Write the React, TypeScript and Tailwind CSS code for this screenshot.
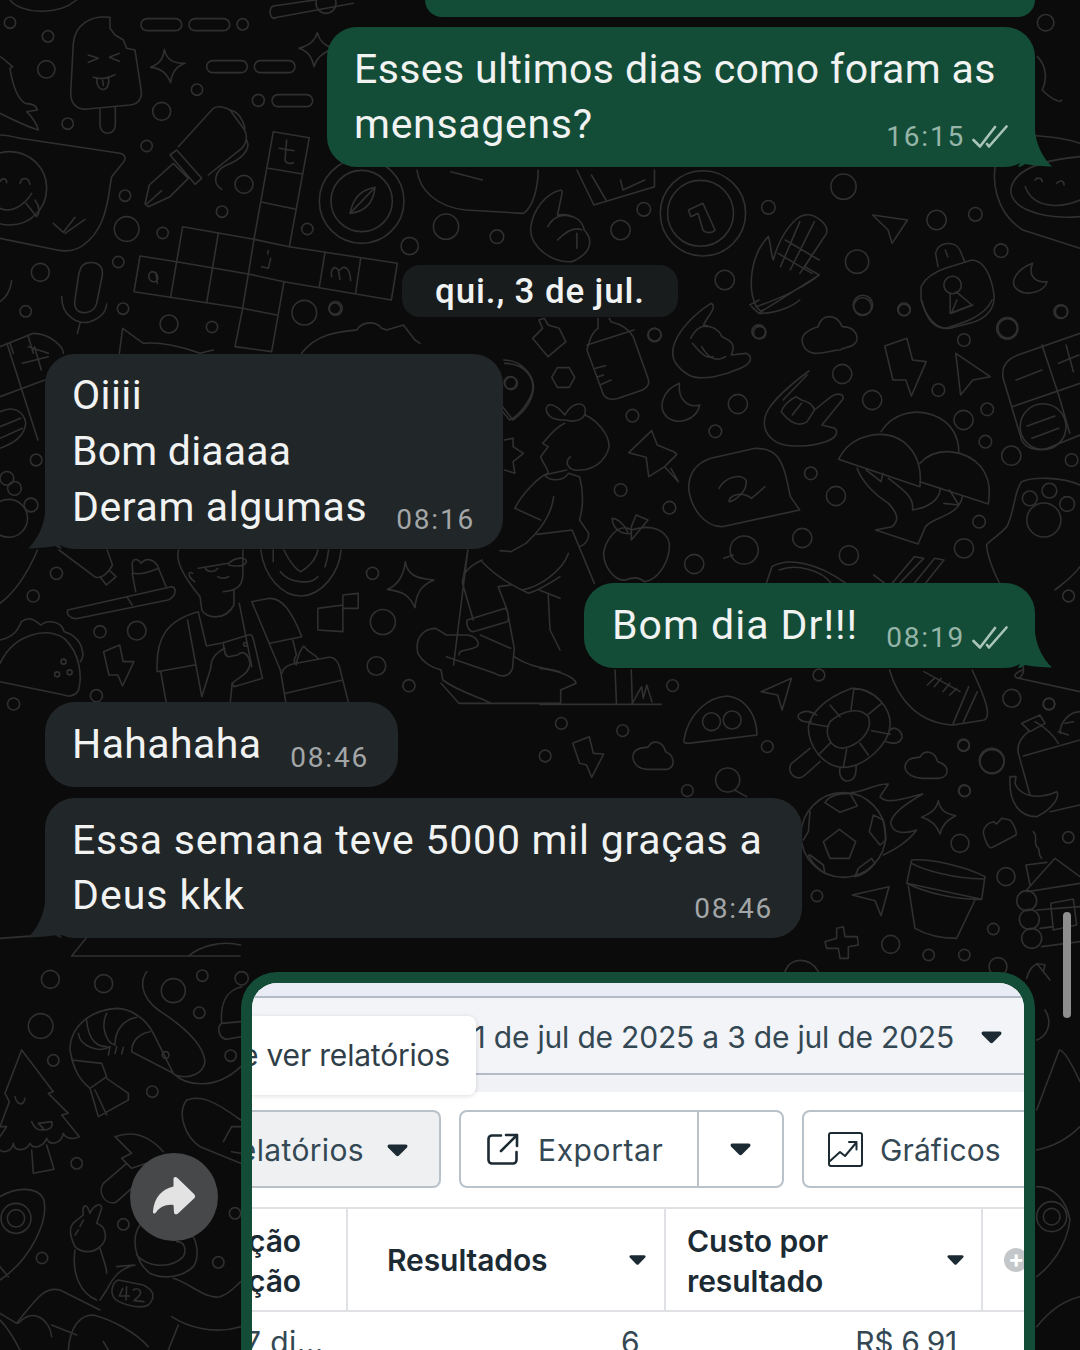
const stroke = '#303030';

interface DoodleRegion {
  x: number;
  y: number;
  sx: number;
  sy: number;
  circles: number[][];
  paths: string[];
}

// line drawings of the chat wallpaper, each block in the coordinates of one part of the picture
const doodles: DoodleRegion[] = [
  {
    x: 0, y: 0, sx: 3, sy: 3,
    circles: [[30,68,17],[144,109,17],[139,208,26],[203,371,17],[591,269,17],[728,73,17],[775,301,18],[485,334,27],[440,438,17],[375,587,17],[732,553,27],[666,635,17],[380,687,37],[488,699,17],[922,687,17],[355,786,17],[121,817,27],[77,934,17],[369,926,17],[507,972,27],[636,981,17],[913,938,37],[1005,926,17],[1229,738,26],[30,565,110],[1085,603,127],[1085,603,92],[978,10,30]],
    paths: [
      'M441 56 H527 A18 18 0 0 1 527 92 H441 A18 18 0 0 1 441 56Z',
      'M585 56 H671 A18 18 0 0 1 671 92 H585 A18 18 0 0 1 585 56Z',
      'M638 182 H724 A18 18 0 0 1 724 218 H638 A18 18 0 0 1 638 182Z',
      'M781 182 H867 A18 18 0 0 1 867 218 H781 A18 18 0 0 1 781 182Z',
      'M834 284 H920 A18 18 0 0 1 920 320 H834 A18 18 0 0 1 834 284Z',
      'M330 52 C270 45 225 75 220 130 L212 280 C212 312 232 330 262 327 L390 315 C415 312 428 295 423 268 L405 150 L380 145 L370 120 L345 105 L330 85 Z',
      'M300 328 V375 C300 408 346 408 346 375 V322',
      'M265 165 L295 175 L265 187 M358 160 L328 172 L358 184 M280 232 C300 238 325 235 345 224 M290 236 C290 285 335 275 325 230 M308 240 L310 256',
      'M493 148 C500 180 520 190 555 190 C525 200 515 220 512 248 C500 220 485 205 452 202 C480 190 490 175 493 148Z',
      'M952 98 C958 125 975 138 1000 145 C975 155 950 170 942 200 C935 170 925 155 897 145 C925 138 945 125 952 98Z',
      'M435 612 L448 555 L520 490 L565 535 L510 590 L445 620Z M510 465 L530 450 L605 535 L585 553 Z M535 440 L640 325 C655 315 680 325 690 330 L730 385 C745 405 740 430 725 445 L625 525 M690 330 C715 335 730 360 735 385 M740 420 C755 450 720 480 680 495 C645 510 635 550 665 568 M440 612 L485 572',
      'M820 395 L928 413 L868 740 L1192 790 L1174 900 L852 845 L815 1055 L705 1040 L728 925 L402 875 L420 768 L530 785 L548 680 L762 718 Z',
      'M805 505 L908 522 M787 607 L888 628 M762 718 L868 740 M530 785 L745 822 L852 845 M655 700 L620 908 M728 925 L830 945 M762 718 L728 925 M530 785 L512 890 M975 757 L958 860 M1082 775 L1067 878',
      'M860 420 L855 480 C858 492 870 492 880 488 M838 445 L882 452 M805 752 L803 762 M812 775 L805 805 L785 800 M995 830 C990 805 1005 795 1015 810 L1020 838 M1020 810 C1030 795 1050 800 1052 842 M455 815 C440 820 445 848 465 845 C478 840 475 815 455 815 M468 822 L472 850',
      'M1050 640 C1060 590 1085 570 1125 562 C1120 610 1095 635 1050 640Z M1050 640 L1125 562',
      'M0 405 C20 405 40 410 60 415 L360 460 C378 465 378 478 370 487 L335 530 L330 560 C320 640 300 700 250 735 C225 755 190 755 160 748 L0 715',
      'M0 545 C8 530 20 535 20 548 M60 550 C65 530 85 530 90 553 M0 625 C30 640 70 620 95 580 M78 610 L110 650 C120 640 120 620 105 600 M160 670 L190 697 L225 652 M195 700 L255 658',
      'M225 900 C220 925 235 940 255 938 C285 935 290 915 293 895 L307 825 C310 800 295 785 268 788 C245 790 240 805 235 830Z M185 890 C185 950 235 975 270 965 C300 955 318 935 320 912 M240 970 L232 1000',
      'M0 170 C10 175 25 190 38 200 L30 205 C40 270 60 300 75 310 C100 310 110 320 112 330 L80 335 C95 350 110 370 115 390 C80 380 40 360 0 340',
      'M35 842 C30 880 15 895 0 905 M358 1060 L368 985 L430 1030 C480 1025 550 1040 600 1060 L640 1050',
      'M905 1060 C950 1000 1020 995 1070 990 C1090 960 1130 965 1145 985 L1160 990 L1210 975 L1245 1020 L1260 1030',
      'M0 1040 L100 1000 C150 1000 190 1040 190 1060 M85 1010 L100 1060 M30 1030 L40 1060 M85 1040 L145 1060',
      'M30 0 C60 40 170 50 230 0 M820 18 L945 0 M820 54 L1060 10 M820 18 C805 25 808 55 825 55',
    ],
  },
  {
    x: 500, y: 300, sx: 2.703, sy: 3,
    circles: [[980,20,24],[1092,28,17],[1518,35,17],[1372,85,26],[1254,120,17],[418,104,17],[702,98,17],[925,222,26],[1185,270,17],[1006,300,26],[643,312,26],[358,347,17],[1317,328,17],[1253,360,26],[582,394,17],[1312,425,17],[1382,467,26],[1545,480,17],[840,520,17],[908,588,26],[326,570,17],[458,623,17],[1295,665,17],[817,714,26],[943,766,26],[1254,745,26],[525,792,26],[30,250,17],[1468,380,62],[1432,595,20],[1485,572,20],[1533,612,20],[1470,660,46],[660,750,38]],
    paths: [
      'M265 55 V85 C250 95 245 110 240 130 L235 150 L280 285 C290 300 305 300 320 295 L385 270 C400 262 405 250 400 235 L360 110 C350 90 335 75 300 65 L295 55 M235 135 L362 90 M258 205 L285 197 M265 230 L280 225 M270 255 L300 240',
      'M88 115 L115 85 L105 60 L120 55 L130 75 L160 85 L178 125 L130 170 Z M140 232 L155 203 L187 203 L202 232 L187 262 L155 262Z',
      'M570 10 C540 30 500 70 480 110 C455 160 465 195 510 225 C545 245 610 225 650 205 C680 190 685 170 665 160 L625 165 C640 130 620 120 600 110 C590 85 570 80 550 75 C560 50 590 20 570 10 M515 115 C530 85 545 75 560 80 M520 130 C550 170 560 175 575 170 M545 140 C565 180 590 185 610 170',
      'M850 160 C815 155 810 115 825 100 C840 85 850 85 860 80 C870 40 910 40 925 80 C965 80 975 120 955 135 C940 145 930 140 920 150 C900 150 880 160 850 160Z',
      'M1040 138 L1100 115 L1115 180 L1152 185 L1112 288 L1097 240 L1062 240 Z M1232 160 L1325 230 L1278 240 L1245 285 Z',
      'M1568 100 L1400 165 C1365 180 1355 205 1360 235 L1410 420 C1420 445 1450 455 1480 445 L1568 405 M1465 135 L1510 285 L1540 400 M1385 320 L1568 250 M1395 240 L1465 210 M1510 190 L1565 165 M1530 135 L1550 215 M1425 378 L1500 348 M1438 415 L1510 385',
      'M10 180 C60 180 95 230 90 270 C85 310 60 340 35 360 L0 310',
      'M485 250 C440 270 425 320 450 350 C475 375 530 365 540 315 C510 325 480 300 485 250Z',
      'M835 213 C790 250 750 290 730 320 C705 360 710 400 745 425 C775 445 840 440 880 425 C910 415 915 395 905 385 L870 375 L925 300 C935 285 915 275 895 290 L850 330 C845 310 830 305 815 300 L800 290 C780 300 765 320 760 335 C785 370 810 380 830 365 L850 330 M765 300 L830 225 M790 345 L815 310',
      'M175 345 C150 310 125 305 125 330 C130 355 150 360 175 360 C210 370 235 355 230 325 C225 305 195 305 175 345 M175 370 C145 385 125 420 115 430 L130 440 L110 470 C115 490 130 505 130 520 C105 530 60 580 40 625 L110 660 M180 510 L120 525 C135 545 170 545 185 520 L215 530 C225 570 225 620 215 660 L240 700 C240 720 230 735 215 740 M145 590 C140 640 110 690 70 730 L30 755 L0 752 M100 703 L195 690 L255 850 M185 760 C170 810 110 860 60 870 M230 345 C260 360 295 400 295 440 C285 490 245 510 215 510 C190 515 170 490 190 470',
      'M410 392 L348 458 L395 472 L402 530 L445 500 L478 463 L470 455 L425 435Z M445 500 L482 545 L462 505',
      'M690 445 L570 475 C530 490 510 520 510 565 C515 620 550 680 600 680 L810 630 L785 590 C775 540 770 500 750 470 C735 450 710 445 690 445Z M592 565 C610 530 650 520 665 540 C670 570 640 600 620 605 C615 590 650 570 680 595 L716 560',
      'M1030 395 C1060 340 1120 325 1170 345 C1220 365 1240 410 1240 455 M915 478 C950 400 1040 385 1090 425 C1130 460 1140 510 1135 560 Z M1135 490 C1180 435 1260 450 1300 500 C1325 540 1325 570 1320 612 L1135 545',
      'M965 505 C980 550 1020 590 1050 610 C1075 640 1080 660 1060 680 L1015 690 L1130 732 L1150 680 C1170 650 1240 650 1250 590 M1115 630 C1170 620 1190 590 1190 565 M1050 535 C1090 570 1120 590 1115 630 M990 510 L1030 545 L1035 520 M1200 610 L1240 615 L1215 570',
      'M1568 555 C1520 530 1440 530 1410 545 C1390 570 1390 640 1370 680 C1345 710 1320 725 1315 735 C1320 790 1345 840 1360 870 M1568 800 C1540 840 1510 860 1500 870',
      'M355 690 C320 665 285 720 280 760 C280 800 310 845 340 840 C360 830 375 830 390 845 C430 840 460 780 458 730 C450 690 410 670 355 690 M355 720 L355 680 M345 695 C335 670 315 655 303 655 C305 685 325 705 355 700 M355 680 L368 645 L400 660 L355 720',
      'M630 765 L605 775 M720 850 L735 800 C780 770 860 790 935 850 M755 810 C800 790 870 810 895 850 M1010 825 L1040 850 M1060 850 L1120 770 L1145 775 L1080 850 M1120 850 L1175 775 L1200 780 L1150 850',
      'M675 15 L700 0 M680 20 L700 40 L712 30 M700 40 C760 40 800 10 810 0 M1140 0 C1150 50 1170 85 1205 85 C1250 70 1310 50 1330 0 M1220 40 L1235 0 M1220 40 L1278 15',
    ],
  },
  {
    x: 320, y: 0, sx: 2.063, sy: 3,
    circles: [[1497,68,17],[1080,560,26],[668,628,14],[260,680,26],[365,710,14],[620,690,20],[925,622,14],[1352,643,14],[1272,660,20],[1405,752,14],[835,840,20],[1108,785,24],[1120,915,20],[1205,930,12],[1528,935,14],[1418,985,22],[690,1005,14],[905,995,14],[32,925,14],[790,640,88],[785,640,68],[1305,855,18]],
    paths: [
      'M200 510 C205 570 240 620 300 630 L420 640 C440 620 450 560 450 510 M270 515 L335 540',
      'M530 510 L565 615 L690 560 L690 510 M560 525 L590 600 M620 540 L625 570 L670 540',
      'M497 570 C465 580 440 630 435 680 C430 740 480 790 520 785 C560 760 565 720 545 690 C540 650 510 640 490 645 L500 575 Z M470 680 C480 650 500 640 520 650 M490 720 C510 690 525 680 540 690 M530 745 L530 700',
      'M760 630 L790 610 L815 690 C810 700 795 700 790 690 L780 640 L765 650Z',
      'M925 710 C890 760 880 860 900 920 L910 935 L1030 825 L1000 800 L1045 700 C1050 670 1020 640 1000 645 C980 650 950 700 935 780 C930 760 930 730 925 710 M960 720 L1030 780 M945 760 L1015 820 M990 665 L950 800 M1020 665 L970 810 M1045 700 L990 820 M900 920 C960 890 1000 860 1030 825',
      'M1140 645 L1212 660 L1180 730 L1172 690Z',
      'M1240 860 C1250 830 1270 815 1290 805 L1345 780 C1370 780 1385 830 1390 880 C1395 930 1370 960 1340 970 L1300 985 C1270 990 1250 950 1240 900Z M1275 800 L1270 760 C1275 725 1310 720 1320 750 L1330 785 M1295 770 L1290 750 M1300 880 L1300 940 L1345 915 L1312 875',
      'M1470 790 C1435 810 1420 850 1440 870 C1460 890 1495 875 1500 845 C1475 850 1460 825 1470 790Z',
      'M1568 470 C1490 480 1430 510 1425 570 C1425 620 1480 660 1568 650 M1475 540 C1480 530 1490 535 1490 545 M1520 550 C1525 540 1535 540 1535 555 M1455 560 C1470 620 1520 630 1568 600',
      'M1460 405 C1510 410 1550 420 1568 430 M1400 460 C1380 540 1395 640 1450 690 L1568 745 M1480 170 C1500 200 1500 240 1490 270 C1510 300 1530 310 1530 300',
    ],
  },
  {
    x: 0, y: 340, sx: 2.904, sy: 3,
    circles: [[1482,128,18],[42,445,20],[20,415,20],[90,495,20],[25,535,55],[105,360,17]],
    paths: [
      'M1465 70 C1530 70 1555 120 1545 160 C1530 200 1500 230 1480 240 L1460 215 M1465 300 L1490 295 L1490 320 L1520 340 L1490 365 L1495 400 L1465 390',
      'M0 170 L130 120 M20 10 L110 300 M65 70 L140 50 M100 20 L120 90 M0 215 C40 195 70 215 75 250 C70 290 40 310 0 325 M0 260 L60 235 M0 295 L65 265',
    ],
  },
  {
    x: 0, y: 540, sx: 2.8, sy: 3,
    circles: [[158,100,17],[93,168,17],[280,275,17],[383,272,26],[1043,100,17],[1072,246,35],[1054,378,26],[1145,437,17],[270,467,17],[38,492,17],[178,365,7],[195,397,7],[160,403,7],[687,313,5]],
    paths: [
      'M105 30 C85 80 50 150 0 190 M165 30 L265 110 C280 118 300 105 315 75 L300 30 M280 110 L298 135 L325 110 L305 90',
      'M372 100 L370 70 C375 50 390 60 395 70 C410 50 430 60 440 75 L465 140 M372 100 C395 105 420 95 445 85 M380 155 L370 100 M190 210 L480 140 C495 140 495 170 470 180 L220 235 C195 240 185 220 190 210 M355 170 L370 195',
      'M500 30 C490 60 510 105 560 170 L565 210 C575 235 630 245 655 195 L655 150 L625 155 M680 30 V100 C680 130 670 145 650 150 M540 100 C525 90 525 110 545 125 M555 85 L640 70 C660 50 690 50 690 65 C685 80 660 80 640 75 M575 85 C580 95 600 100 610 85 M610 110 C620 118 630 115 640 110',
      'M555 215 C470 240 435 290 440 395 L545 375 M525 240 L565 470 L590 385 C590 345 620 330 630 325 M555 215 L578 318 L625 308 M670 190 L705 380 M450 395 L465 485 M650 430 L645 485 M705 185 L755 175 C790 175 815 210 845 290 L755 310 M705 185 L785 390 L800 485',
      'M625 308 L695 285 C705 282 708 290 710 300 L735 415 L655 440 L650 430 C670 410 700 400 700 370 C695 340 680 330 665 345 L640 350 C632 350 628 340 625 308',
      'M820 300 L830 345 C820 360 825 370 830 375 M830 370 C835 340 845 325 850 318 C865 340 885 345 890 355 M790 400 C790 390 800 375 830 370 L920 352 C940 350 950 370 955 400 L975 485 M800 460 L960 420',
      'M890 205 L960 195 L960 275 L890 270 Z M960 195 V165 L1003 160 V205 L960 205',
      'M1135 65 C1140 105 1165 115 1215 120 C1180 135 1165 160 1162 203 C1145 165 1130 155 1085 148 C1115 135 1130 110 1135 65Z',
      'M730 30 C740 110 790 170 845 168 C900 165 950 100 955 30 M765 30 V65 M785 95 C810 130 870 135 890 110 M910 80 C915 65 918 50 920 30 M795 30 C810 65 830 90 842 95 C860 85 885 60 890 30',
      'M0 370 C40 280 130 260 180 295 C225 340 230 410 220 450 C210 470 190 470 180 465 L0 425 M0 300 C40 290 50 270 60 245 C85 225 100 245 115 255 C130 240 170 240 180 275 C200 280 225 300 230 330 C235 345 230 360 225 365',
      'M290 335 L335 315 L345 365 L375 365 L343 438 L330 405 L305 405Z',
      'M1310 30 L1295 130 L1325 240 M1310 30 L1270 375 M1350 60 C1310 80 1295 100 1295 130 M1350 65 C1380 100 1420 130 1480 160 C1510 150 1540 130 1568 110 M1395 140 L1430 135 M1395 140 L1420 210 L1440 325 L1435 385 C1425 415 1400 410 1385 400 L1250 350 M1308 240 L1415 205 C1425 215 1425 240 1420 245 L1325 275 C1312 275 1305 255 1308 240 M1345 285 L1430 325 M1510 150 L1568 175 M1535 165 L1540 270 L1568 330 M1440 350 C1480 380 1530 385 1568 395',
      'M1170 340 C1160 290 1190 265 1220 265 L1250 285 L1310 285 C1335 290 1345 310 1335 320 C1310 335 1285 325 1285 345 M1170 340 C1180 360 1200 380 1235 390 L1240 420 C1270 445 1310 460 1345 475 L1375 490 M1235 430 L1285 490 H1568',
    ],
  },
  {
    x: 540, y: 570, sx: 2.904, sy: 3,
    circles: [[810,315,17],[385,347,17],[62,460,17],[240,482,17],[15,558,17],[660,530,17],[1370,385,26],[1478,402,17],[1230,525,17],[1312,572,36],[1232,662,17],[428,662,17],[1535,78,17],[498,455,26],[558,450,26],[545,630,35]],
    paths: [
      'M0 295 C50 300 100 320 105 340 L60 360 L60 400 M0 403 H352 M218 300 L222 400 M265 300 L268 400 L295 350 L300 385 L310 345 L325 395',
      'M642 365 L730 325 L703 420 L690 375Z',
      'M418 510 C430 430 490 380 545 378 C600 385 630 440 630 495 L430 520 C420 520 416 515 418 510Z',
      'M310 598 C270 595 260 555 280 540 C295 530 305 535 315 530 C325 510 355 510 365 545 C390 555 395 590 370 598Z',
      'M1110 625 C1060 620 1050 590 1070 570 C1085 560 1095 565 1105 560 C1115 540 1145 540 1155 575 C1190 585 1190 620 1160 625Z',
      'M95 520 L143 500 L155 550 L185 552 L150 622 L135 585 L115 580Z M565 660 L600 680',
      'M1015 300 C1040 390 1100 460 1200 465 L1290 450 C1310 440 1300 400 1255 300 M1115 305 L1220 365 M1145 325 L1125 345 M1165 325 L1145 350 M1190 340 L1170 365 M1210 355 L1190 375 M1200 460 L1245 350 M1230 455 L1270 365',
      'M1400 300 C1380 310 1370 320 1390 325 L1568 365 M1400 285 C1410 300 1400 320 1390 325',
    ],
  },
  {
    x: 780, y: 680, sx: 3, sy: 3,
    circles: [[807,72,17],[551,197,17],[636,245,36],[554,333,17],[540,490,27],[865,472,17],[678,590,27],[111,648,17],[640,747,17],[332,793,27],[446,825,17],[553,825,17],[654,860,27],[190,465,127],[740,662,30],[748,718,30],[755,775,30]],
    paths: [
      'M85 140 C90 110 120 60 215 25 C290 25 335 90 330 140 C325 190 260 260 190 262 C130 260 85 200 85 140Z M150 125 C190 90 240 80 265 110 C280 150 240 195 190 205 C150 205 130 160 150 125Z M150 75 L180 110 M222 25 L213 88 M305 70 L265 103 M275 152 L330 163 M240 190 L265 225 M200 208 L190 262 M150 190 L115 225 M88 130 L145 140',
      'M95 125 C60 130 45 110 60 100 C75 90 95 95 110 105 M330 150 C345 135 370 155 365 175 C355 195 335 190 318 185 M90 205 L35 250 C15 275 50 310 75 285 L120 245 M180 265 C175 290 190 305 205 303 C225 300 230 280 228 255',
      'M135 368 C145 350 170 340 210 340 L232 378 L180 397Z M178 448 L227 485 L208 535 L150 535 L130 485Z M268 455 L280 405 L310 420 L318 480 L300 495Z M85 525 C95 550 120 570 135 580 L130 555 L90 525 M275 535 L235 565 L225 590 C250 585 270 570 285 550 Z M90 395 L85 455 L70 480',
      'M215 338 C250 335 290 310 325 312 L300 350 C320 375 370 355 428 342 C380 370 335 400 332 430 C340 465 380 460 410 450 C380 490 340 510 310 525',
      'M475 362 C480 390 495 400 527 407 C500 420 485 435 480 462 C470 435 455 420 425 412 C450 400 470 390 475 362Z',
      'M610 460 C610 440 620 430 640 425 L650 432 L665 415 L690 420 C700 430 712 455 708 465 L635 503 C625 505 615 480 610 460Z',
      'M395 540 C450 535 560 560 615 590 L605 658 L380 610 Z M395 550 C430 570 520 595 610 597 M385 618 L405 745 C440 765 490 775 530 775 L585 660 M380 610 C440 640 530 660 605 658',
      'M217 645 L327 620 L303 707 L285 662Z',
      'M170 745 L190 740 L195 770 L232 770 L235 795 L205 800 L205 835 L180 835 L175 805 L140 805 L135 785 L170 775Z',
      'M725 130 L780 105 L795 130 L750 155 Z M745 155 C720 175 710 195 715 220 L750 345 M730 228 L900 180 M765 125 C800 145 820 165 835 190 M840 160 C840 125 870 95 900 95 M855 130 L880 125 M835 155 L865 165',
      'M690 290 L708 290 L705 310 C715 340 760 365 830 335 C840 350 820 385 770 410 C720 410 685 370 690 290 M810 395 L900 375',
      'M740 630 L825 535 L900 590 M738 555 L800 547 M750 615 L738 555 M740 635 L900 610 M812 670 L880 657 L890 735 L820 750 Z M770 690 L900 680 M780 745 L820 740 M785 800 L900 785 M760 455 C775 470 760 485 770 500 C785 510 770 520 785 535',
      'M15 875 C30 830 90 830 115 875 M740 895 C750 860 765 845 795 855 L790 875',
    ],
  },
  {
    x: 0, y: 930, sx: 3, sy: 3,
    circles: [[151,148,27],[311,161,27],[520,182,36],[607,137,17],[598,248,17],[122,288,37],[160,391,17],[457,485,17],[692,377,17],[230,700,17],[48,865,45],[48,865,26],[126,984,17],[370,883,17],[705,850,17],[655,997,17],[497,375,10],[725,145,20]],
    paths: [
      'M215 78 H720 M215 78 L258 25 M565 78 C600 50 660 30 722 45 M0 25 L200 10',
      'M210 360 C210 290 270 240 350 235 C395 235 440 270 460 310 L520 430 L395 365 C395 330 420 310 450 305 M235 310 C240 350 300 370 330 350 M260 270 C265 340 300 350 320 350 M320 250 C300 290 320 340 345 345 M410 262 C370 270 345 300 345 345 M215 390 L305 400 L320 440 L270 475 C240 450 220 420 210 360 M270 475 L295 560 L385 510 L385 490 L320 445 M285 480 L320 555 M330 350 L325 375 M350 350 L345 370 M370 352 L365 372',
      'M440 125 C410 170 440 220 490 250 C550 290 610 340 615 395 C610 430 570 450 525 435 M520 430 C560 470 650 480 722 410',
      'M65 360 L160 485 L145 490 L205 550 L185 555 L238 620 C220 630 195 625 190 610 C185 640 150 650 140 625 C130 650 100 660 90 640 C80 660 45 670 40 640 C35 665 10 670 0 660 M65 360 L15 490 L28 515 L0 590 L20 590 L0 620 M95 660 L100 730 L162 718 L140 645 M45 500 C50 525 70 530 75 505 M95 575 C105 600 125 605 130 595 L115 580 L155 575 C160 590 150 600 130 600',
      'M345 620 C400 600 450 620 490 665 M345 620 L395 670 L365 685 L395 715 L440 700 M380 700 L310 760 C290 790 320 830 350 815 L395 775',
      'M0 800 C50 770 110 770 130 805 C150 870 90 990 0 1050 M0 1010 L25 1040',
      'M225 950 C210 920 205 890 225 875 L250 855 C245 825 260 815 270 850 C280 825 305 815 305 835 L290 880 C320 890 325 930 300 950 C280 970 245 970 225 950 M225 960 C215 1030 240 1090 290 1110 M300 955 C310 990 320 1010 320 1030 M235 900 L225 915 M250 870 L240 890',
      'M420 885 C395 920 400 990 450 1030 C490 1050 550 1040 580 1010 C600 980 590 930 575 915 M410 975 C440 1010 510 1020 550 980 C560 960 555 935 530 935',
      'M350 1010 L400 1005 M300 1110 L320 1080 C340 1040 360 1015 405 1005 M300 1140 L180 1080 C140 1070 120 1090 50 1180 L0 1150 M520 1045 C570 1060 620 1110 660 1100 C690 1090 700 1075 722 1055',
      'M355 1050 L430 1065 C460 1080 470 1100 445 1125 C420 1140 350 1120 340 1100 C330 1080 340 1055 355 1050Z M368 1075 L358 1098 L388 1098 M380 1070 L378 1110 M400 1080 C415 1070 430 1085 415 1100 L402 1112 L432 1115',
      'M205 1260 C210 1190 240 1155 280 1155 C340 1170 410 1210 445 1250 M310 1235 L325 1260 M515 1160 C560 1190 640 1215 722 1190 M535 1185 L505 1260 M55 1180 C100 1130 150 1170 155 1220 M155 1185 L230 1215 M60 1260 C40 1220 20 1190 0 1170',
      'M560 510 C600 495 640 510 722 570 M560 510 C530 550 555 620 600 650 L722 700 M670 635 L695 590 L722 590 M695 665 L722 670 M725 170 C680 180 660 220 665 280 C650 290 655 325 680 328 L722 320 M665 280 L722 275',
    ],
  },
  {
    x: 620, y: 960, sx: 3, sy: 3,
    circles: [[1295,770,45],[1295,770,25]],
    paths: [
      'M1380 365 C1350 300 1330 270 1318 270 L1250 450 M1380 500 C1340 540 1300 560 1250 570 M1275 150 C1300 190 1280 230 1250 240 M1290 60 L1250 10',
      'M1250 680 C1300 680 1340 720 1350 780 C1340 860 1290 920 1250 950 M1250 1100 C1300 1040 1340 1020 1380 1010',
    ],
  },
];

function Wallpaper() {
  return (
    <svg className="absolute inset-0" width="1080" height="1350" viewBox="0 0 1080 1350" fill="none" stroke={stroke} strokeWidth="1.6" strokeLinecap="round" strokeLinejoin="round" aria-hidden="true">
      {doodles.map((region) => (
        <g key={`${region.x}-${region.y}`}>
          {region.circles.map(([cx, cy, r]) => (
            <circle key={`${cx}-${cy}-${r}`} cx={region.x + cx / region.sx} cy={region.y + cy / region.sy} r={r / region.sx} />
          ))}
          <g transform={`translate(${region.x} ${region.y}) scale(${1 / region.sx} ${1 / region.sy})`}>
            {region.paths.map((d) => (
              <path key={d} d={d} vectorEffect="non-scaling-stroke" />
            ))}
          </g>
        </g>
      ))}
    </svg>
  );
}

function Ticks() {
  return (
    <svg className="shrink-0" width="36" height="24" viewBox="0 0 36 24" fill="none" stroke="#a9c5ba" strokeWidth="2.6" strokeLinecap="round" strokeLinejoin="round">
      <path d="M1.5 15 L8 21.5 L23 2" />
      <path d="M15 19 L17 21.5 L34.5 1.5" />
    </svg>
  );
}

function Tail({ incoming }: { incoming?: boolean }) {
  if (incoming) {
    return (
      <svg className="absolute bottom-0 -left-[17px]" width="34" height="36" viewBox="0 0 34 36" fill="#212628">
        <path d="M17 0 C16 12 10 26 0 35.5 C8 35.5 20 34.5 27 33 C29 34.5 31 36 34 36Z" />
      </svg>
    );
  }
  return (
    <svg className="absolute bottom-0 -right-[17px]" width="34" height="36" viewBox="0 0 34 36" fill="#144d37">
      <path d="M17 0 C18 12 24 26 34 35.5 C26 35.5 14 34.5 7 33 C5 34.5 3 36 0 36Z" />
    </svg>
  );
}

function Caret({ small }: { small?: boolean }) {
  return (
    <svg className="shrink-0" width={small ? 17 : 21} height={small ? 12 : 13} viewBox="0 0 21 13" fill="#1c2b33">
      <path d="M2.5 0.5 H18.5 C20.5 0.5 21 2 20 3.4 L12 11.6 C11 12.6 10 12.6 9 11.6 L1 3.4 C0 2 0.5 0.5 2.5 0.5Z" />
    </svg>
  );
}

function Time({ value, out }: { value: string; out?: boolean }) {
  return (
    <span className={`block text-[28px] leading-[32px] tracking-[1.8px] whitespace-nowrap ${out ? 'text-[#95b5a8]' : 'text-[#a3a6a7]'}`}>
      {value}
    </span>
  );
}

function ReportShot() {
  return (
    <div className="relative w-[794px] h-[378px] border-[11px] border-b-0 border-[#144d37] rounded-t-[36px] overflow-hidden bg-white font-['Inter',sans-serif] text-[#1c2b33]">
      <div className="h-[15px] bg-[#e9ecf4] border-b-2 border-[#b4bbc8]" />
      <div className="h-[77px] bg-[#f2f4f8] border-b-2 border-[#b4bbc8] flex items-center justify-end gap-[27px] pr-[22px] pt-[3px]">
        <span className="text-[30px] whitespace-nowrap text-[#344854] tracking-[-0.2px]">1 de jul de 2025 a 3 de jul de 2025</span>
        <Caret />
      </div>
      <div className="h-[17px] bg-[#f0f2f6]" />

      <div className="absolute left-0 top-[33px] w-[224px] h-[79px] bg-white rounded-r-lg shadow-[0_1px_5px_rgba(0,0,0,0.14)] flex items-center justify-end pr-[26px] overflow-hidden">
        <span className="text-[30px] whitespace-nowrap text-[#2f3e48] tracking-[-0.2px]">pode ver relatórios</span>
      </div>

      <div className="flex gap-[18px] mt-[18px] h-[78px] text-[30px] tracking-[0.35px] text-[#344854]">
        <div className="w-[189px] shrink-0 bg-[#eef0f2] border-2 border-l-0 border-[#b9c1c9] rounded-r-lg flex items-center justify-end gap-[23px] pr-[31px] pt-[3px]">
          <span className="whitespace-nowrap shrink-0">Relatórios</span>
          <Caret />
        </div>
        <div className="w-[325px] shrink-0 border-2 border-[#b9c1c9] rounded-lg flex items-stretch">
          <div className="w-[238px] flex items-center gap-[19px] pl-[26px] border-r-2 border-[#b9c1c9]">
            <svg className="shrink-0" width="32" height="32" viewBox="0 0 32 32" fill="none" stroke="#1c2b33" strokeWidth="2.6" strokeLinecap="round" strokeLinejoin="round">
              <path d="M14 2.5 H5 A3.5 3.5 0 0 0 1.5 6 V27 A3.5 3.5 0 0 0 5 30.5 H26 A3.5 3.5 0 0 0 29.5 27 V19" />
              <path d="M19 2 H30 V13 M30 2 L14 18" />
            </svg>
            <span className="pt-[3px] tracking-[0.6px]">Exportar</span>
          </div>
          <div className="flex-1 flex items-center justify-center">
            <Caret />
          </div>
        </div>
        <div className="w-[300px] shrink-0 border-2 border-[#b9c1c9] rounded-lg flex items-center gap-[17px] pl-[24px]">
          <svg className="shrink-0" width="35" height="35" viewBox="0 0 35 35" fill="none" stroke="#1c2b33" strokeWidth="2" strokeLinecap="round" strokeLinejoin="round">
            <rect x="1" y="1" width="33" height="33" rx="2" />
            <path d="M2 29 L12 20 L17 24 L28 11 M21 10 H28.5 V17.5" />
          </svg>
          <span className="pt-[3px] tracking-[0.1px]">Gráficos</span>
        </div>
      </div>

      <div className="mt-[19px] h-[105px] border-y-2 border-[#dfe1e4] flex text-[30px] font-semibold leading-[40px] tracking-[-0.1px]">
        <div className="w-[96px] shrink-0 border-r-2 border-[#dfe1e4] flex flex-col justify-center items-end pr-[45px] pt-[3px] overflow-hidden">
          <span className="whitespace-nowrap">Duração</span>
          <span className="whitespace-nowrap">Aplicação</span>
        </div>
        <div className="w-[318px] shrink-0 border-r-2 border-[#dfe1e4] flex items-center justify-between pl-[39px] pr-[18px]">
          <span>Resultados</span>
          <Caret small />
        </div>
        <div className="w-[317px] shrink-0 border-r-2 border-[#dfe1e4] flex items-center justify-between pl-[21px] pr-[17px]">
          <span className="pt-[3px]">
            Custo por
            <br />
            resultado
          </span>
          <Caret small />
        </div>
        <div className="flex-1 flex items-center pl-[21px] overflow-hidden">
          <div className="w-[24px] h-[24px] shrink-0 rounded-full bg-[#c4c7ca] text-white text-[24px] leading-[22px] text-center font-bold">+</div>
        </div>
      </div>

      <div className="flex text-[30px] leading-[40px] text-[#344854] pt-[10px]">
        <div className="w-[96px] shrink-0">
          <span className="block -ml-[8px] whitespace-nowrap">7 di...</span>
        </div>
        <div className="w-[292px] shrink-0 text-right">6</div>
        <div className="w-[317px] shrink-0 text-right tracking-[-0.3px]">R$ 6,91</div>
      </div>
    </div>
  );
}

export default function App() {
  return (
    <div className="relative w-[1080px] h-[1350px] overflow-hidden bg-[#0b0b0b] font-['Roboto',sans-serif] text-[41px] leading-[55px] tracking-[0.4px] text-[#f1f2f2]">
      <Wallpaper />

      <div className="relative flex flex-col px-[45px]">
        <div className="self-end w-[610px] h-[17px] bg-[#144d37] rounded-b-[26px]" />

        <div className="relative self-end w-[708px] h-[140px] mt-[10px] pt-[15px] pl-[27px] pr-[29px] bg-[#144d37] rounded-[30px]">
          <p className="whitespace-nowrap">Esses ultimos dias como foram as</p>
          <div className="flex justify-between h-[55px]">
            <p className="tracking-[0.7px]">mensagens?</p>
            <div className="flex items-center gap-[7px] h-[32px] mt-[24px] -mr-[2px]">
              <Time value="16:15" out />
              <Ticks />
            </div>
          </div>
          <Tail />
        </div>

        <div className="self-center w-[276px] h-[52px] mt-[98px] rounded-[18px] bg-[#181c1d] flex items-center justify-center text-[35px] tracking-[0.85px] font-medium">
          qui., 3 de jul.
        </div>

        <div className="relative w-[458px] h-[195px] mt-[37px] pt-[13px] pl-[27px] pr-[28px] bg-[#212628] rounded-[30px] leading-[56px]">
          <p>Oiiii</p>
          <p className="tracking-[0.2px]">Bom diaaaa</p>
          <div className="flex justify-between h-[56px]">
            <p className="tracking-[0.6px]">Deram algumas</p>
            <div className="mt-[25px]"><Time value="08:16" /></div>
          </div>
          <Tail incoming />
        </div>

        <div className="relative self-end w-[451px] h-[85px] mt-[34px] pt-[14px] pl-[28px] pr-[29px] bg-[#144d37] rounded-[30px] leading-[56px]">
          <div className="flex justify-between h-[56px]">
            <p className="tracking-[1px]">Bom dia Dr!!!</p>
            <div className="flex items-center gap-[7px] h-[32px] mt-[25px] -mr-[2px]">
              <Time value="08:19" out />
              <Ticks />
            </div>
          </div>
          <Tail />
        </div>

        <div className="w-[353px] h-[85px] mt-[34px] pt-[14px] pl-[27px] pr-[29px] bg-[#212628] rounded-[30px] leading-[56px]">
          <div className="flex justify-between h-[56px]">
            <p>Hahahaha</p>
            <div className="mt-[26px]"><Time value="08:46" /></div>
          </div>
        </div>

        <div className="relative w-[757px] h-[140px] mt-[11px] pt-[15px] pl-[27px] pr-[29px] bg-[#212628] rounded-[30px]">
          <p className="whitespace-nowrap tracking-[0.75px]">Essa semana teve 5000 mil graças a</p>
          <div className="flex justify-between h-[55px]">
            <p className="tracking-[1px]">Deus kkk</p>
            <div className="mt-[25px]"><Time value="08:46" /></div>
          </div>
          <Tail incoming />
        </div>

        <div className="self-end flex items-start gap-[23px] mt-[34px]">
          <div className="w-[88px] h-[88px] mt-[181px] rounded-full bg-[#474849] flex items-center justify-center">
            <svg width="88" height="88" viewBox="0 0 88 88" fill="#e3e3e3">
              <path d="M43.5 25.5 C44 23.5 46 23.5 47.5 25 L64 41 C65.5 42.5 65.5 44 64 45.5 L48 60.5 C46 62 44.5 61.5 44 59.5 L43.5 52 C36 51 29.5 54 26 59.5 C24.5 61.5 22.5 60.5 23 58 C24.5 44 32 36 43.5 33.5Z" />
            </svg>
          </div>
          <ReportShot />
        </div>
      </div>

      {/* scroll thumb of the chat list */}
      <div className="absolute right-[9px] top-[912px] w-[8px] h-[106px] rounded-full bg-[#8e8e8e]" />
    </div>
  );
}
